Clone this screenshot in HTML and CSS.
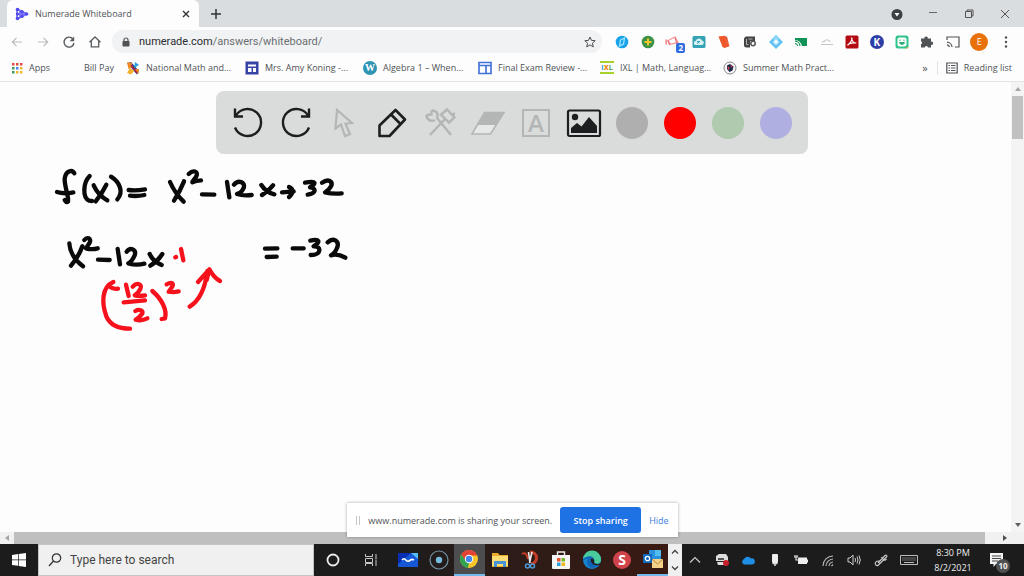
FILE: index.html
```html
<!DOCTYPE html>
<html lang="en">
<head>
<meta charset="utf-8">
<meta name="viewport" content="width=device-width, initial-scale=1">
<title>Numerade Whiteboard</title>
<link rel="stylesheet" href="styles.css">
</head>
<body>
<header class="browser">
  <div class="tabstrip">
    <div class="tab">
      <svg class="ic14" viewBox="0 0 14 14"><path d="M2 2v10M2 2l10 5-10 5M2 7h8M5 4v6" fill="none" stroke="#7a74f7" stroke-width="1.8"/><g fill="#5148f0"><circle cx="2.5" cy="2.5" r="1.8"/><circle cx="2.5" cy="7" r="1.6"/><circle cx="2.5" cy="11.500" r="1.8"/><circle cx="7" cy="4.600" r="1.7"/><circle cx="7" cy="9.400" r="1.7"/><circle cx="11.500" cy="7" r="1.700"/></g></svg>
      <span class="tab-title">Numerade Whiteboard</span>
      <button class="plain" aria-label="Close tab"><svg class="ic8" viewBox="0 0 8 8"><path d="M1 1l6 6M7 1l-6 6" stroke="#333" stroke-width="1.400"/></svg></button>
    </div>
    <button class="plain newtab" aria-label="New tab"><svg class="ic12" viewBox="0 0 12 12"><path d="M6 1v10M1 6h10" stroke="#333" stroke-width="1.500"/></svg></button>
    <div class="window-controls">
      <button class="plain" aria-label="Tab search"><svg class="ic12" viewBox="0 0 12 12"><circle cx="6" cy="6.500" r="5.500" fill="#3c4043"/><path d="M3.500 5h5L6 8.600z" fill="#fff"/></svg></button>
      <button class="plain" aria-label="Minimize"><svg class="ic12" viewBox="0 0 12 12"><path d="M2 4.500h8" stroke="#666"/></svg></button>
      <button class="plain" aria-label="Restore"><svg class="ic12" viewBox="0 0 12 12"><path d="M2.500 3.500h6v6h-6zM4 3.500v-1.500h6v6H8.500" fill="none" stroke="#555"/></svg></button>
      <button class="plain" aria-label="Close"><svg class="ic12" viewBox="0 0 12 12"><path d="M2 2l8 8M10 2l-8 8" stroke="#555"/></svg></button>
    </div>
  </div>

  <div class="toolbar">
    <nav class="nav">
      <button class="plain" aria-label="Back"><svg class="ic14" viewBox="0 0 14 14"><path d="M12 7H2.500M6.500 2.800L2.300 7l4.200 4.200" fill="none" stroke="#b8bbbe" stroke-width="1.200"/></svg></button>
      <button class="plain" aria-label="Forward"><svg class="ic14" viewBox="0 0 14 14"><path d="M2 7h9.500M7.500 2.800L11.700 7l-4.200 4.200" fill="none" stroke="#b8bbbe" stroke-width="1.200"/></svg></button>
      <button class="plain" aria-label="Reload"><svg class="ic14" viewBox="0 0 14 14"><path d="M11 4A5 5 0 1 0 12 8" fill="none" stroke="#5a5d60" stroke-width="1.400"/><path d="M12.200 1.500v4.700H7.600z" fill="#5a5d60"/></svg></button>
      <button class="plain" aria-label="Home"><svg class="ic14" viewBox="0 0 14 14"><path d="M1.500 7.200L7 2l5.500 5.200M3.300 6v5.800h7.400V6" fill="none" stroke="#5a5d60" stroke-width="1.300"/></svg></button>
    </nav>
    <div class="omnibox">
      <svg class="ic10" viewBox="0 0 10 10"><rect x="1.500" y="4" width="7" height="5.500" rx=".8" fill="#505356"/><path d="M3 4.500V3a2 2 0 0 1 4 0v1.500" fill="none" stroke="#505356" stroke-width="1.200"/></svg>
      <a class="url" href="#"><span class="host">numerade.com</span>/answers/whiteboard/</a>
      <button class="plain" aria-label="Bookmark this page"><svg class="ic12" viewBox="0 0 12 12"><path d="M6 1l1.500 3.400 3.700.3-2.800 2.500.9 3.700L6 8.900l-3.300 2 .9-3.700L.8 4.700l3.700-.3z" fill="none" stroke="#4a4d50"/></svg></button>
    </div>
    <div class="extensions">
      <svg viewBox="0 0 16 16"><circle cx="8" cy="8" r="6.300" fill="#18a2ea"/><path d="M6.500 6l4-2-1 6-4 2z" fill="none" stroke="#9fe4ff" stroke-width="1.300"/></svg>
      <svg viewBox="0 0 16 16"><circle cx="8" cy="8" r="6.300" fill="#3c9247"/><path d="M8 4.500v7M4.500 8h7" stroke="#f3c62c" stroke-width="2"/></svg>
      <span class="ext-badged"><svg viewBox="0 0 16 16"><path d="M3 6.500L10 3l3 5.500-7.500 1.800z" fill="none" stroke="#f5979b" stroke-width="1.300"/><path d="M1.200 5.500v5M3 6.500l1.500 4.500M10 3l2 7" fill="none" stroke="#f07a80" stroke-width="1.400"/></svg><b class="badge">2</b></span>
      <svg viewBox="0 0 16 16"><rect x="1.500" y="2" width="13" height="12" rx="1.500" fill="#36a3b4"/><path d="M5 11a2 2 0 0 1-.3-4 3.400 3.400 0 0 1 6.300-.5A2.300 2.300 0 0 1 11 11z" fill="#d9f3f5"/><path d="M6 9.500l3-2M6 7.500h3" stroke="#36a3b4"/></svg>
      <svg viewBox="0 0 16 16"><path d="M2.500 2.500l6-.8 5 10.500-5 1.800-2-1z" fill="#f0572b"/><path d="M8.500 1.700L11 3l2.500 9.200" fill="#d9431d"/></svg>
      <svg viewBox="0 0 16 16"><path d="M3.500 2.500h9.500v4.500H8v6.500H4.500Q2 13.500 2 11V4.500z" fill="#454545"/><path d="M4.500 5v5.500h2M6.500 5h4" fill="none" stroke="#b5b5b5"/><circle cx="11" cy="9.500" r="2.200" fill="none" stroke="#5a5a5a" stroke-width="1.600"/></svg>
      <svg viewBox="0 0 16 16"><path d="M8 1l7 7-7 7-7-7z" fill="#62c3f2"/><path d="M8 1l3.500 3.500L8 8 4.500 4.500z" fill="#8ad6fa"/><path d="M8 5l3 3-3 3-3-3z" fill="#e9f8ff"/></svg>
      <svg viewBox="0 0 16 16"><path d="M2 4h12v8H9A7 7 0 0 0 2 6z" fill="#119256"/><path d="M2 7.200A5 5 0 0 1 7 12M2 9.500A3 3 0 0 1 4.700 12" fill="none" stroke="#119256" stroke-width="1.200"/></svg>
      <svg viewBox="0 0 16 16"><path d="M2 10.500h12M5 8c1-3 5-3 6 0M3 8l3-1" fill="none" stroke="#c3c5c7" stroke-width="1.200"/></svg>
      <svg viewBox="0 0 16 16"><rect x="1.500" y="1.500" width="13" height="13" rx="1.500" fill="#b30b12"/><path d="M7.500 4c1.500 0-.5 5-4 7.300 1-1.500 4.500-2.600 8.800-2.300C10 9 8 7 7.500 4z" fill="none" stroke="#fff" stroke-width="1.200"/></svg>
      <span class="disc disc-k">K</span>
      <svg viewBox="0 0 16 16"><rect x="1.500" y="1.500" width="13" height="13" rx="2.500" fill="#32c48d"/><rect x="3.500" y="3.500" width="9" height="9" rx="2" fill="#fff"/><path d="M6 5.500v1.500M10 5.500v1.500M5.500 8.500h5c-.5 2.500-4.500 2.500-5 0z" fill="#32a878" stroke="#32a878"/><path d="M11 14.500h2.500l1-2z" fill="#f0a33a"/></svg>
      <svg viewBox="0 0 16 16"><path d="M2 4.500h3.500a1.700 1.700 0 1 1 3.300 0H12v3.200a1.700 1.700 0 1 1 0 3.300v2.500H9a1.600 1.600 0 0 0-3.200 0H2v-3.200a1.600 1.600 0 0 0 0-3z" fill="#505356"/></svg>
      <svg viewBox="0 0 16 16"><path d="M2 6V3h12v10h-4M2 8.200A5 5 0 0 1 7 13M2 10.800A3 3 0 0 1 4.500 13" fill="none" stroke="#505356" stroke-width="1.200"/></svg>
      <button class="avatar" aria-label="Profile">E</button>
      <svg viewBox="0 0 16 16"><g fill="#505356"><circle cx="8" cy="3.500" r="1.200"/><circle cx="8" cy="8" r="1.200"/><circle cx="8" cy="12.500" r="1.200"/></g></svg>
    </div>
  </div>

  <nav class="bookmarks">
    <a href="#" class="bm bm-apps"><svg class="ic12" viewBox="0 0 12 12"><g fill="#e5483c"><path d="M1 1h2.500v2.500H1zM5 1h2.500v2.500H5zM9 1h2.500v2.500H9z"/></g><path d="M1 5h2.500v2.500H1z" fill="#3a9d57"/><path d="M5 5h2.500v2.500H5z" fill="#4787ed"/><path d="M9 5h2.500v2.500H9z" fill="#f2b82c"/><path d="M1 9h2.500v2.500H1z" fill="#3a9d57"/><path d="M5 9h2.500v2.500H5zM9 9h2.500v2.500H9z" fill="#f2b82c"/></svg>Apps</a>
    <a href="#" class="bm bm-bill">Bill Pay</a>
    <a href="#" class="bm bm-national"><svg class="ic14" viewBox="0 0 14 14"><path d="M1 2l4-1 8 9-2 3.500z" fill="#1c3e90"/><path d="M1 1.500h4.500l1 4.500-4 2z" fill="#f48a21"/><path d="M9 1l4 3-5 3z" fill="#29a4e2"/><path d="M1 12l3-5 4 3-3 3.500z" fill="#f0b22a"/><path d="M8.500 8l4.500 0-.5 5z" fill="#f48a21"/><path d="M5 4l6 8" stroke="#b3283c" stroke-width="1.600"/></svg>National Math and...</a>
    <a href="#" class="bm bm-koning"><svg class="ic14" viewBox="0 0 14 14"><rect x=".5" y=".5" width="13" height="13" fill="#3744a6"/><path d="M3 3.500h8v2H3zM3 7h3.500v4H3zM8 7h3v4H8z" fill="#fff"/></svg>Mrs. Amy Koning -...</a>
    <a href="#" class="bm bm-algebra"><span class="disc disc-w">W</span>Algebra 1 – When...</a>
    <a href="#" class="bm bm-final"><svg class="ic14" viewBox="0 0 14 14"><path d="M1 1.500h12v11H1zM1 4.500h12M8 4.500v8" fill="#fff" stroke="#3f6fd9" stroke-width="1.600"/></svg>Final Exam Review -...</a>
    <a href="#" class="bm bm-ixl"><span class="ixl"><i>I</i><b>X</b><em>L</em></span>IXL | Math, Languag...</a>
    <a href="#" class="bm"><svg class="ic14" viewBox="0 0 14 14"><circle cx="7" cy="7" r="6" fill="#f4f4f4" stroke="#888" stroke-width="1"/><path d="M4 4.500l3-1.500 3.500 2.500-1 4-3 1.500-2.500-3z" fill="#1d2a4c"/><path d="M4.500 5l2.500 2-2 2zM7.500 4l2.500 1.500-2 1z" fill="#d4404a"/></svg>Summer Math Pract...</a>
    <button class="plain more" aria-label="More bookmarks">»</button>
    <a href="#" class="bm reading"><svg class="ic12" viewBox="0 0 12 12"><path d="M.8 1h10.400v10H.8z" fill="none" stroke="#505356" stroke-width="1.200"/><path d="M2.500 3.500H4M5 3.500h4.500M2.500 6H4M5 6h4.500M2.500 8.500H4M5 8.500h4.500" stroke="#505356"/></svg>Reading list</a>
  </nav>
</header>

<main class="board">
  <div class="tools" role="toolbar" aria-label="Drawing tools">
    <button class="plain" aria-label="Undo"><svg class="ic36" viewBox="0 0 36 36"><path d="M6 10.500A13.500 13.500 0 1 1 5 22.500M5 3.500v8h8" fill="none" stroke="#1c1e20" stroke-width="2.400"/></svg></button>
    <button class="plain" aria-label="Redo"><svg class="ic36" viewBox="0 0 36 36"><path d="M30 10.500A13.500 13.500 0 1 0 31 22.500M31 3.500v8h-8" fill="none" stroke="#1c1e20" stroke-width="2.400"/></svg></button>
    <button class="plain" aria-label="Select"><svg class="ic36" viewBox="0 0 36 36"><path d="M11 5L9.500 23.500l5.500-4 4 11.500 5-1.800-4.500-10.500 6.500-.7z" fill="none" stroke="#b4b6b6" stroke-width="2.200"/></svg></button>
    <button class="plain" aria-label="Pen"><svg class="ic36" viewBox="0 0 36 36"><path d="M5.500 31V20.500L21.500 5l9.500 9.500L15.500 31zM17 9.500l9.500 9.500" fill="none" stroke="#1c1e20" stroke-width="2.600" stroke-linejoin="round"/></svg></button>
    <button class="plain" aria-label="Tools"><svg class="ic36" viewBox="0 0 36 36"><g fill="none" stroke="#b4b6b6" stroke-width="2.400"><path d="M9.500 5.500c5-.5 7.500 4 5.500 7.500L29 30M4.500 10c0 5 5 7 8.500 5M9.500 5.500v4l-5 .5M8 30l15-16"/><path d="M19 9.500l6-5 7.500 8-5.500 5zM30 9.500l3-1"/></g></svg></button>
    <button class="plain" aria-label="Eraser"><svg class="ic36" viewBox="0 0 36 36"><path d="M2 29L14.500 7.500H34L20.500 29z" fill="#e6e7e7" stroke="#b4b6b6" stroke-width="1.600"/><path d="M7 20L14.500 7.500H34L26 20z" fill="#b4b6b6"/></svg></button>
    <button class="plain" aria-label="Text"><span class="text-tool">A</span></button>
    <button class="plain" aria-label="Image"><svg class="ic36" viewBox="0 0 36 36"><rect x="2" y="5.500" width="32" height="25.500" rx="1.500" fill="none" stroke="#1c1e20" stroke-width="2.200"/><circle cx="9" cy="12" r="3.200" fill="#1c1e20"/><path d="M5 28v-5l6-5 4.500 3.500L23 12l8 9v7z" fill="#1c1e20"/></svg></button>
    <button class="swatch gray" aria-label="Gray"></button>
    <button class="swatch red" aria-label="Red"></button>
    <button class="swatch green" aria-label="Green"></button>
    <button class="swatch violet" aria-label="Violet"></button>
  </div>

  <svg class="ink ink-black" viewBox="0 0 960 360" role="img" aria-label="f(x) = x² − 12x + 32;  x² − 12x = −32">
    <path d="M106 40C99 27 80 33 77 56C76 80 90 108 87 125Q82 128 77 120M54 96Q75 103 103 97"/>
    <path d="M152 48C132 68 130 112 150 122L159 123M164 76Q176 104 205 121M202 74Q188 102 170 124M216 50C242 66 255 96 235 118"/>
    <path d="M269 90Q290 93 318 88M273 107Q294 110 316 105"/>
    <path d="M393 66Q408 100 434 125M435 64Q423 94 405 122M449 42C463 28 479 34 472 49C467 59 459 63 460 67Q471 62 486 61M489 103L526 104"/>
    <path d="M564 66L571 112M585 74C598 58 620 66 614 84Q606 100 594 102Q612 108 638 105M667 75Q682 98 706 103M702 76Q688 94 669 105"/>
    <path d="M729 97L764 94M750 81Q772 92 750 111M798 68C825 62 832 67 822 76L813 82C833 84 832 100 806 104M849 68C868 55 883 64 876 79Q870 91 858 97Q883 103 908 100"/>
    <path d="M91 250C93 278 111 303 132 319M130 259Q119 290 96 317M136 240C144 230 158 234 152 248Q146 258 141 265Q158 270 176 265M177 299L212 300"/>
    <path d="M236 267L243 313M263 275C274 260 293 268 287 286Q279 304 268 310Q292 317 316 311M332 282Q342 304 368 315M370 282Q356 304 334 317"/>
    <path d="M678 266L715 265M683 291L713 290M761 265L794 265M814 242C842 235 846 245 824 259C848 257 848 286 815 285M866 247C883 231 901 243 895 262Q889 279 876 286Q896 280 919 293"/>
  </svg>
  <svg class="ink ink-red" viewBox="0 0 450 330" role="img" aria-label="plus (−12/2)², with an arrow up to the gap">
    <path d="M256 82L258 81M273 57L280 91"/>
    <path d="M70 156C34 172 35 220 49 259C61 287 88 296 120 296M62 172Q74 178 84 176"/>
    <path d="M108 164L116 198M128 170C142 155 158 163 151 177Q145 190 134 196Q148 199 165 196M101 217L165 211M136 243C148 236 164 242 155 253Q148 263 137 269Q154 274 172 265"/>
    <path d="M187 183C215 207 232 240 225 265L215 267M230 163C248 153 253 162 244 174L236 185Q250 188 266 184"/>
    <path d="M299 230C323 215 344 188 352 123M324 156L358 118Q371 143 390 153M358 118L350 150"/>
  </svg>

  <div class="vscroll" aria-hidden="true"><i class="arrow up"></i><i class="vthumb"></i><i class="arrow down"></i></div>

  <aside class="share">
    <i class="grip"></i>
    <span>www.numerade.com is sharing your screen.</span>
    <button class="stop">Stop sharing</button>
    <a href="#">Hide</a>
  </aside>
</main>

<div class="hscroll" aria-hidden="true"><i class="arrow left"></i><i class="hthumb"></i><i class="arrow right"></i></div>

<footer class="taskbar">
  <button class="plain start" aria-label="Start"><svg class="ic14" viewBox="0 0 14 14"><path d="M0 2l6-.9v5.500H0zM6.700 1L14 0v6.600H6.700zM0 7.300h6v5.500L0 12zM6.700 7.300H14V14l-7.300-1z" fill="#fff"/></svg></button>
  <label class="search"><svg class="ic14" viewBox="0 0 14 14"><circle cx="8.500" cy="5" r="4.200" fill="none" stroke="#333" stroke-width="1.200"/><path d="M5.500 8L1 13" stroke="#333" stroke-width="1.300"/></svg><input type="text" placeholder="Type here to search" aria-label="Type here to search"></label>
  <div class="system-apps">
    <button class="plain" aria-label="Cortana"><svg class="ic14" viewBox="0 0 14 14"><circle cx="7" cy="7" r="5.500" fill="none" stroke="#eee" stroke-width="1.800"/></svg></button>
    <button class="plain" aria-label="Task view"><svg class="ic14" viewBox="0 0 14 14"><path d="M1.500 1v2.500h7V1M1.500 5.500h7v4h-7zM1.500 13v-2.500h7V13M12 1v3M12 6.500V13M10.800 5h2.400" fill="none" stroke="#c8c8c8"/></svg></button>
  </div>
  <div class="apps">
    <button class="plain" aria-label="Whiteboard"><svg class="ic20" viewBox="0 0 20 20"><path d="M0 3h20v14H0z" fill="#1557d5"/><path d="M0 3h13L0 14z" fill="#072db0"/><path d="M13 3h7v6z" fill="#59bdf5"/><path d="M4 10c3-4 4 3 7 1s3-2 5-1" fill="none" stroke="#fff" stroke-width="1.600"/></svg></button>
    <button class="plain" aria-label="Recorder"><svg class="ic20" viewBox="0 0 20 20"><circle cx="10" cy="10" r="9" fill="none" stroke="#7293a5" stroke-width="1.200"/><circle cx="10" cy="10" r="3.200" fill="#75bde0"/></svg></button>
    <button class="plain active" aria-label="Chrome"><svg class="ic20" viewBox="0 0 20 20"><circle cx="10" cy="10" r="9" fill="#f8c62b"/><path d="M2.200 5.500A9 9 0 0 1 17.800 5.500L18 6.500h-8L6.500 12z" fill="#e34133"/><path d="M2.200 5.500L6.800 12 10 14l-1 5A9 9 0 0 1 2.200 5.500z" fill="#31a350"/><circle cx="10" cy="10" r="4.200" fill="#fff"/><circle cx="10" cy="10" r="3.200" fill="#4384ef"/></svg></button>
    <button class="plain" aria-label="File Explorer"><svg class="ic20" viewBox="0 0 20 20"><path d="M2 3h6l1.500 2H18v12H2z" fill="#e9ad29"/><path d="M2 6h16v10H2z" fill="#fbdc75"/><path d="M4 17v-6h12v6h-3v-3H7v3z" fill="#4794d8"/></svg></button>
    <button class="plain" aria-label="Snip"><svg class="ic20" viewBox="0 0 20 20"><path d="M10 2a6 6 0 0 1 1 12" fill="none" stroke="#c53d28" stroke-width="3"/><path d="M2 4c3-2 5 0 6 5" fill="none" stroke="#c53d28" stroke-width="2"/><path d="M8.500 2L10 13M12 2l-2.500 11" stroke="#eee" stroke-width="1.600"/><circle cx="7.500" cy="16" r="2" fill="none" stroke="#4d99d5" stroke-width="1.500"/><circle cx="12.500" cy="16" r="2" fill="none" stroke="#4d99d5" stroke-width="1.500"/></svg></button>
    <button class="plain" aria-label="Microsoft Store"><svg class="ic20" viewBox="0 0 20 20"><path d="M1 5h18v13a1 1 0 0 1-1 1H2a1 1 0 0 1-1-1z" fill="#f5f5f5"/><path d="M6.500 5V2h7v3" fill="none" stroke="#eee" stroke-width="1.400"/><path d="M6 8h3.500v3.500H6z" fill="#e9522f"/><path d="M10.500 8H14v3.500h-3.500z" fill="#75b72b"/><path d="M6 12.500h3.500V16H6z" fill="#28a0dd"/><path d="M10.500 12.500H14V16h-3.500z" fill="#f5b51d"/></svg></button>
    <button class="plain" aria-label="Edge"><svg class="ic20" viewBox="0 0 20 20"><circle cx="10" cy="10" r="9" fill="#1686cf"/><path d="M1 9a9 9 0 0 1 18 1c0 5-7 4-7 2 2-4-5-7-11-3z" fill="#48ca9d"/><path d="M1 9c7-6 13-1 11 3 0 2 5 3 6.500 1C13 21 5 18 5 12c0-2 1-3 2-3.500C4 8 2 9 1 12z" fill="#1264b4"/><path d="M9 9c2-1 4 1 3 3 0 2 4 3 7 .5L18 14.500c-5 2-10-1-9-5.500z" fill="#241b1b"/></svg></button>
    <button class="plain" aria-label="Snagit"><span class="disc disc-s">S</span></button>
    <button class="plain running" aria-label="Outlook"><svg class="ic20" viewBox="0 0 20 20"><path d="M6 1h12v12H6z" fill="#2a91dc"/><path d="M12 1h6v6h-6z" fill="#51bdf1"/><path d="M0 5h9v9H0z" fill="#0f6abd"/><circle cx="4.500" cy="9.500" r="2.200" fill="none" stroke="#fff" stroke-width="1.300"/><path d="M9 10h11v9H9z" fill="#f5d18a"/><path d="M9 10l5.500 5 5.500-5" fill="none" stroke="#b98739"/></svg></button>
  </div>
  <div class="app-scroll"><svg class="ic8" viewBox="0 0 8 8"><path d="M1 5.500l3-3 3 3" fill="none" stroke="#444" stroke-width="1.300"/></svg><svg class="ic8" viewBox="0 0 8 8"><path d="M1 2.500l3 3 3-3" fill="none" stroke="#444" stroke-width="1.300"/></svg></div>
  <div class="tray">
    <svg class="ic14" viewBox="0 0 14 14"><path d="M2 9.500l5-5 5 5" fill="none" stroke="#ccc" stroke-width="1.200"/></svg>
    <svg class="ic14" viewBox="0 0 14 14"><path d="M1 3l3-2h7l2 3v4H1zM2 9h7v3H3z" fill="#ddd"/><path d="M3 5h6v2H3z" fill="#555"/><circle cx="11" cy="10" r="3" fill="#c5202a"/></svg>
    <svg class="ic14" viewBox="0 0 14 14"><path d="M3 11.500a3 3 0 0 1 0-5.500 4 4 0 0 1 7-.5 3 3 0 0 1 1.500 6z" fill="#1f8fe5"/></svg>
    <svg class="ic14" viewBox="0 0 14 14"><rect x="4" y="1" width="6" height="9" rx="1" fill="#eee"/><path d="M4.500 10.500h5M7 10v3" fill="none" stroke="#ddd" stroke-width="1.500"/></svg>
    <svg class="ic14" viewBox="0 0 14 14"><path d="M4 4.500h9v6.500H4zM13 6.500h1v3h-1z" fill="#eee"/><path d="M0 4h4M1 2v2M3 2v2M2 4v3h3" fill="none" stroke="#ddd" stroke-width="1.200"/></svg>
    <svg class="ic14" viewBox="0 0 14 14"><path d="M2 13A10 10 0 0 1 12 3M5 13A7.500 7.500 0 0 1 12 6M8 13a4.500 4.500 0 0 1 4-4M10.500 13l1.500-1.500" fill="none" stroke="#b8b8b8" stroke-width="1.100"/></svg>
    <svg class="ic14" viewBox="0 0 14 14"><path d="M1 5h2l3-3v10L3 9H1zM8 5q1 2 0 4M10 3.500q2 3.500 0 7M12 2.500q2.500 4.500 0 9" fill="none" stroke="#ccc"/></svg>
    <svg class="ic14" viewBox="0 0 14 14"><path d="M4 10L11 2.500c1.500-1 2.500.5 1.500 1.500L6 10.500M7.500 4c1 3 4 4 5 2M6 8.500c-3-1.500-5.500 1-4.500 3s4 1 4.500-2" fill="none" stroke="#ccc" stroke-width="1.100"/></svg>
    <svg class="keyboard" viewBox="0 0 18 14"><path d="M.5 2.500h17v9H.5z" fill="none" stroke="#bbb"/><path d="M2.500 5h13M2.500 7h13" stroke="#bbb" stroke-dasharray="1 1"/><path d="M4 9.500h10" stroke="#bbb"/></svg>
  </div>
  <time class="clock"><span>8:30 PM</span><span>8/2/2021</span></time>
  <button class="plain notices" aria-label="10 notifications"><svg class="ic14" viewBox="0 0 14 14"><path d="M0 0h13v11H6l-2.500 3v-3H0z" fill="#f2f2f2"/><path d="M2 3h9M2 5.500h9M2 8h6" stroke="#444"/></svg><b class="count">10</b></button>
</footer>
</body>
</html>
```

FILE: styles.css
```css
* {
  box-sizing: border-box;
}

body {
  margin: 0;
  height: 100vh;
  display: flex;
  flex-direction: column;
  overflow: hidden;
  background: #fdfdfd;
  color: #505356;
  font-family: "Open Sans", "Noto Sans", sans-serif;
  font-size: 9px;
}

a {
  color: inherit;
  text-decoration: none;
}

svg {
  display: block;
  flex: none;
}

.plain {
  display: flex;
  align-items: center;
  justify-content: center;
  padding: 0;
  border: 0;
  background: none;
  color: inherit;
  font: inherit;
}

.ic8 { width: 8px; height: 8px; }
.ic10 { width: 10px; height: 10px; }
.ic12 { width: 12px; height: 12px; }
.ic14 { width: 14px; height: 14px; }
.ic20 { width: 20px; height: 20px; }
.ic36 { width: 36px; height: 36px; }

/* Browser chrome */
.browser {
  flex: none;
  border-bottom: 1px solid #e3e4e5;
}

.tabstrip {
  display: flex;
  align-items: center;
  height: 27px;
  padding-left: 7px;
  background: #dadde0;
}

.tab {
  display: flex;
  align-items: center;
  gap: 6px;
  width: 192px;
  height: 27px;
  padding: 0 9px 0 8px;
  border-radius: 6px 6px 0 0;
  background: #fdfdfd;
}

.tab-title {
  flex: 1;
}

.newtab {
  margin-left: 11px;
}

.window-controls {
  display: flex;
  gap: 24px;
  margin-left: auto;
  padding-right: 13px;
}

.toolbar {
  display: flex;
  align-items: center;
  height: 29px;
  padding: 0 10px;
}

.nav {
  display: flex;
  gap: 12px;
}

.omnibox {
  flex: 1;
  display: flex;
  align-items: center;
  gap: 8px;
  height: 23px;
  margin: 0 12px 0 10px;
  padding: 0 6px 0 9px;
  border-radius: 12px;
  background: #f0f2f3;
}

.url {
  flex: 1;
  font-family: Roboto, "Open Sans", sans-serif;
  font-size: 11px;
  color: #6b6e71;
}

.host {
  color: #2b2d30;
}

.extensions {
  flex: none;
  display: flex;
  align-items: center;
  justify-content: space-between;
  width: 400px;
}

.extensions svg {
  width: 16px;
  height: 16px;
}

.ext-badged {
  position: relative;
}

.badge {
  position: absolute;
  right: -4px;
  bottom: -3px;
  width: 9px;
  height: 10px;
  border-radius: 2px;
  background: #2f6de0;
  color: #fff;
  font-size: 8px;
  line-height: 10px;
  text-align: center;
}

.disc {
  display: block;
  flex: none;
  width: 14px;
  height: 14px;
  border-radius: 50%;
  color: #fff;
  font-size: 10px;
  font-weight: 700;
  line-height: 14px;
  text-align: center;
}

.disc-k { background: #2e3ea8; }

.disc-w {
  background: #2f93b3;
  font-family: "Liberation Serif", serif;
}

.disc-s {
  width: 18px;
  height: 18px;
  background: #d1434a;
  font-size: 14px;
  line-height: 18px;
}

.avatar {
  width: 18px;
  height: 18px;
  padding: 0;
  border: 0;
  border-radius: 50%;
  background: #e8710a;
  color: #fff;
  font: 9px/18px "Open Sans", sans-serif;
}

.bookmarks {
  display: flex;
  align-items: center;
  height: 25px;
  padding: 0 12px 2px 11px;
  white-space: nowrap;
}

.bm {
  display: flex;
  align-items: center;
  gap: 6px;
}

.bm-apps { width: 73px; }
.bm-bill { width: 42px; }
.bm-national { width: 119px; }
.bm-koning { width: 118px; }
.bm-algebra { width: 115px; }
.bm-final { width: 122px; }
.bm-ixl { width: 123px; }

.ixl {
  display: flex;
  justify-content: center;
  width: 14px;
  height: 13px;
  border: solid #a9d12d;
  border-width: 2px 0;
  font-size: 7px;
  font-weight: 700;
  line-height: 9px;
}

.ixl i, .ixl em { font-style: normal; }
.ixl i { color: #1c9ad6; }
.ixl b { color: #f08a1d; }
.ixl em { color: #57a639; }

.more {
  margin-left: auto;
  padding-right: 9px;
  font-size: 11px;
}

.reading {
  height: 14px;
  padding-left: 8px;
  border-left: 1px solid #e2e3e4;
}

/* Whiteboard */
.board {
  position: relative;
  flex: 1;
  min-height: 0;
  padding-top: 9px;
}

.tools {
  display: grid;
  grid-template-columns: repeat(12, 48px);
  align-items: center;
  justify-items: center;
  width: max-content;
  height: 63px;
  margin: 0 auto;
  padding: 0 8px;
  border-radius: 8px;
  background: #dadbdb;
}

.text-tool {
  width: 28px;
  height: 28px;
  border: 2px solid #b4b6b6;
  color: #b4b6b6;
  font: 600 24px/24px "Open Sans", sans-serif;
  text-align: center;
}

.swatch {
  width: 32px;
  height: 32px;
  padding: 0;
  border: 0;
  border-radius: 50%;
}

.gray { background: #afafaf; }
.red { background: #fe0000; }
.green { background: #afcaaf; }
.violet { background: #b0afe1; }

.ink {
  position: absolute;
  fill: none;
  stroke-width: 13;
  stroke-linecap: round;
  stroke-linejoin: round;
}

.ink-black {
  left: 39px;
  top: 78px;
  width: 320px;
  height: 120px;
  stroke: #0a0a0a;
}

.ink-red {
  left: 90px;
  top: 148px;
  width: 150px;
  height: 110px;
  stroke: #f5121c;
}

.vscroll {
  position: absolute;
  top: 0;
  right: 0;
  bottom: 0;
  display: flex;
  flex-direction: column;
  align-items: center;
  width: 13px;
  padding: 5px 0;
  background: #f4f4f4;
}

.vthumb {
  width: 11px;
  height: 43px;
  margin: 5px 0 auto;
  background: #c1c1c1;
}

.arrow {
  border: 3px solid transparent;
}

.up { border-top: 0; border-bottom: 4px solid #a5a5a5; }
.down { border-bottom: 0; border-top: 4px solid #606060; }
.left { border-left: 0; border-right: 4px solid #a5a5a5; }
.right { border-right: 0; border-left: 4px solid #505050; }

.hscroll {
  flex: none;
  display: flex;
  align-items: center;
  gap: 5px;
  height: 12px;
  padding: 0 17px 0 5px;
  background: #f1f1f1;
}

.hthumb {
  flex: 1;
  align-self: stretch;
  margin-right: 13px;
  background: #bfbfbf;
}

.share {
  position: absolute;
  z-index: 1;
  right: 0;
  bottom: -5px;
  left: 1px;
  display: flex;
  align-items: center;
  gap: 8px;
  width: max-content;
  height: 34px;
  margin: 0 auto;
  padding: 0 9px;
  background: #fff;
  box-shadow: 0 0 3px #0005;
}

.share a {
  color: #3d7de0;
}

.grip {
  width: 4px;
  height: 9px;
  border: solid #c8c8c8;
  border-width: 0 1px;
}

.stop {
  width: 81px;
  height: 26px;
  padding: 0;
  border: 0;
  border-radius: 3px;
  background: #1f72e4;
  color: #fff;
  font: 600 9px "Open Sans", sans-serif;
}

/* Taskbar */
.taskbar {
  flex: none;
  display: flex;
  align-items: stretch;
  height: 32px;
  background: #1c1c1c;
  color: #eee;
}

.start {
  width: 38px;
}

.search {
  flex: 0 1 276px;
  display: flex;
  align-items: center;
  gap: 8px;
  padding: 0 9px;
  border: 1px solid #c4c4c4;
  background: #f0f0f0;
}

.search input {
  flex: 1;
  min-width: 0;
  padding: 0;
  border: 0;
  background: none;
  font: 12px Roboto, "Open Sans", sans-serif;
}

.search input::placeholder {
  color: #444;
}

.system-apps {
  display: grid;
  grid-template-columns: 38px 38px;
}

.apps {
  flex: none;
  display: grid;
  grid-template-columns: repeat(9, 1fr);
  width: 275px;
  margin-left: 3px;
  background: linear-gradient(90deg, #1c1c1c, #2c1c18 40%, #3a1a12);
}

.active {
  border-bottom: 2px solid #76b9ed;
  background: #4b4d4f;
}

.running {
  border-bottom: 2px solid #76b9ed;
}

.app-scroll {
  display: flex;
  flex-direction: column;
  align-items: center;
  justify-content: space-around;
  width: 14px;
  background: #f0f0f0;
}

.tray {
  flex: 1;
  display: flex;
  align-items: center;
  justify-content: space-between;
  padding: 0 14px 0 6px;
}

.keyboard {
  width: 18px;
  height: 14px;
}

.clock {
  display: flex;
  flex-direction: column;
  justify-content: center;
  width: 42px;
  line-height: 15px;
  text-align: center;
}

.notices {
  position: relative;
  width: 50px;
  padding-right: 4px;
}

.count {
  position: absolute;
  right: 14px;
  bottom: 3px;
  width: 14px;
  height: 14px;
  border-radius: 50%;
  background: #505050;
  font-size: 8px;
  line-height: 14px;
}
```
